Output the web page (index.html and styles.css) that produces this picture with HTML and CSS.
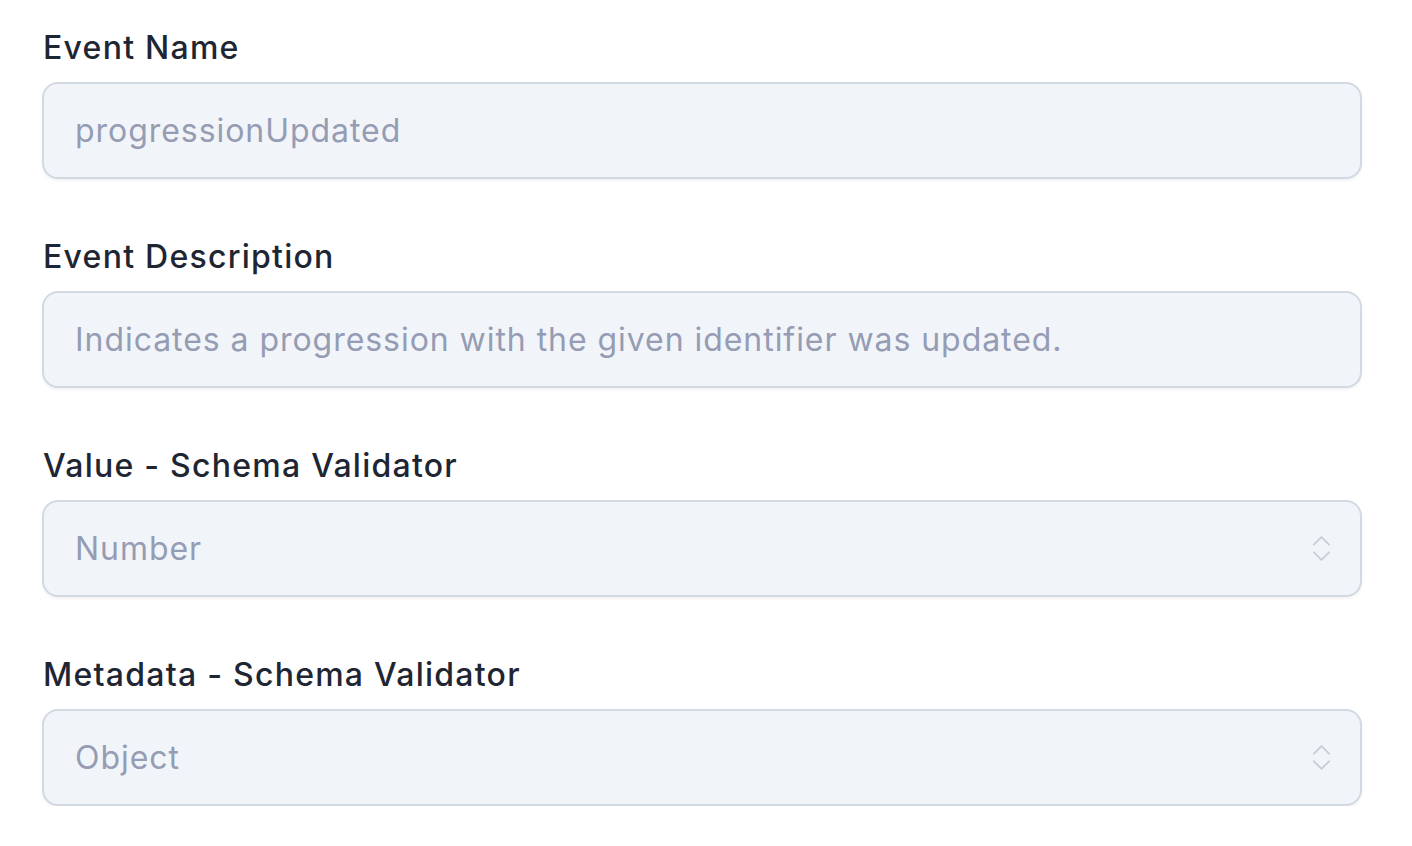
FILE: index.html
```html
<!DOCTYPE html>
<html lang="en">
    <head>
        <title>Event</title>
        <link rel="stylesheet" href="styles.css">
    </head>
    <body>
        <form class="event-form">
            <!-- Event name -->
            <div class="field">
                <label class="field-label" for="name">Event Name</label>
                <input class="field-input" id="name" type="text" placeholder="progressionUpdated" disabled>
            </div>

            <!-- Event description -->
            <div class="field">
                <label class="field-label" for="desc">Event Description</label>
                <input class="field-input" id="desc" type="text" placeholder="Indicates a progression with the given identifier was updated." disabled>
            </div>

            <!-- Value validator -->
            <div class="field">
                <label class="field-label" for="value">Value - Schema Validator</label>
                <div class="field-input select-box">
                    <span class="select-text">Number</span>
                    <svg class="select-icon" viewBox="0 0 20 28" fill="none" stroke="currentColor" stroke-width="2" stroke-linecap="round" stroke-linejoin="round">
                        <path d="M2 10 L10 2 L18 10"/>
                        <path d="M2 18 L10 26 L18 18"/>
                    </svg>
                </div>
            </div>

            <!-- Metadata validator -->
            <div class="field">
                <label class="field-label" for="meta">Metadata - Schema Validator</label>
                <div class="field-input select-box">
                    <span class="select-text">Object</span>
                    <svg class="select-icon" viewBox="0 0 20 28" fill="none" stroke="currentColor" stroke-width="2" stroke-linecap="round" stroke-linejoin="round">
                        <path d="M2 10 L10 2 L18 10"/>
                        <path d="M2 18 L10 26 L18 18"/>
                    </svg>
                </div>
            </div>
        </form>
    </body>
</html>
```

FILE: styles.css
```css
body { margin: 0; background: #fff; font-family: Inter, "Noto Sans", sans-serif; color: #1e2533; }

.event-form { padding: 24px 50px 0 42px; display: flex; flex-direction: column; gap: 54px; }

.field { display: flex; flex-direction: column; }
.field-label { font-size: 32px; line-height: 48px; font-weight: 500; letter-spacing: 1.25px; margin-bottom: 10px; padding-left: 1px; }

/* Inputs */
.field-input {
    box-sizing: border-box;
    width: 100%;
    height: 97px;
    padding: 0 29px 0 31px;
    border: 2px solid #d3d9e3;
    border-radius: 16px;
    background-color: #f1f5f9;
    font-family: inherit;
    font-size: 32px;
    letter-spacing: 0.95px;
    color: #959cb3;
    box-shadow: 0 2px 3px rgba(0, 0, 0, 0.05);
}
.field-input::placeholder { color: #959cb3; opacity: 1; }

.select-box { display: flex; align-items: center; justify-content: space-between; }
.select-icon { width: 19px; height: 27px; color: #c8cdd6; }
```
